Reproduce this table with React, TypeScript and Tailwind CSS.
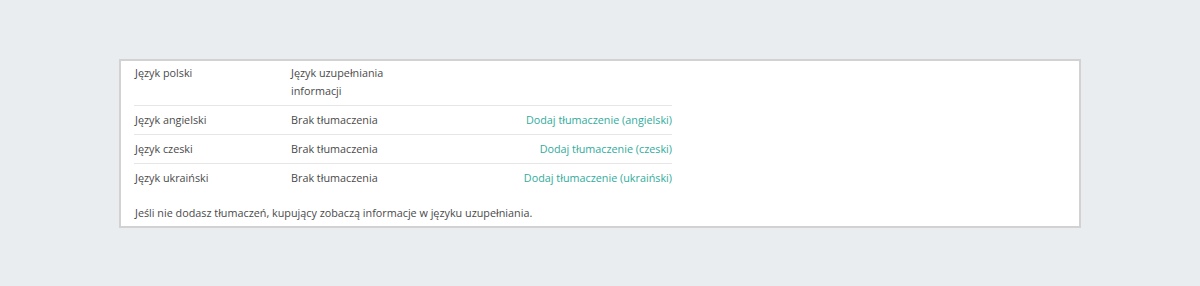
import React from "react";

const rows = [
  { lang: "Język angielski", status: "Brak tłumaczenia", link: "Dodaj tłumaczenie (angielski)" },
  { lang: "Język czeski", status: "Brak tłumaczenia", link: "Dodaj tłumaczenie (czeski)" },
  { lang: "Język ukraiński", status: "Brak tłumaczenia", link: "Dodaj tłumaczenie (ukraiński)" },
];

export default function App() {
  return (
    <div
      className="h-[286px] w-[1200px] bg-[#eaedf0] pt-[59px] pl-[119px] text-[10.8px] leading-[18px] text-[#4a4a4a]"
      style={{ fontFamily: '"Open Sans", "Noto Sans", sans-serif' }}
    >
      <div className="w-[962px] border-2 border-[#d2d2d2] bg-white px-[13px] pb-[4px]">
        <div className="w-[538px]">
          <div className="flex border-b border-[#e6e6e6] pt-[3px] pb-[5px]">
            <div className="w-[157px] pl-px">Język polski</div>
            <div className="w-[110px]">Język uzupełniania informacji</div>
          </div>
          {rows.map((r, i) => (
            <div
              key={r.lang}
              className={
                i < rows.length - 1
                  ? "flex border-b border-[#e6e6e6] py-[5px]"
                  : "flex py-[5px]"
              }
            >
              <div className="w-[157px] pl-px">{r.lang}</div>
              <div className="w-[150px]">{r.status}</div>
              <div className="flex-1 text-right text-[#31ab9c]">{r.link}</div>
            </div>
          ))}
        </div>
        <div className="mt-[12px] pl-px">
          Jeśli nie dodasz tłumaczeń, kupujący zobaczą informacje w języku uzupełniania.
        </div>
      </div>
    </div>
  );
}
